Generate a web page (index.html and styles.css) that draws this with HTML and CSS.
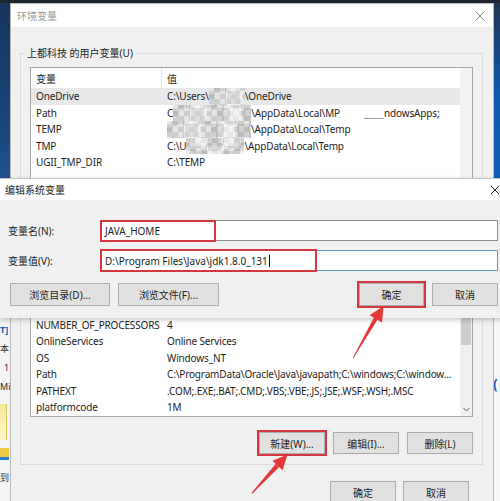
FILE: index.html
```html
<!DOCTYPE html>
<html lang="zh-CN">
<head>
<meta charset="utf-8">
<title>环境变量</title>
<link rel="stylesheet" href="styles.css">
</head>
<body>
<div class="desktop">
  <div class="strip strip-left"></div>
  <div class="strip strip-right"></div>

  <div class="peek peek-left">
    <span class="pk blue">T]</span>
    <span class="pk">本</span>
    <span class="pk indent">1</span>
    <span class="pk">Mi</span>
    <span class="pk-yellow"></span>
    <span class="pk-folder"></span>
    <span class="pk">到</span>
  </div>
  <div class="peek peek-right"><span class="pk blue big">(</span></div>

  <section class="win env">
    <header class="titlebar inactive">
      <span class="title">环境变量</span>
      <span class="close"><svg width="10" height="10" viewBox="0 0 10 10"><path d="M1 1L9 9M9 1L1 9" stroke="#8a8a8a" stroke-width="1"/></svg></span>
    </header>
    <div class="win-body">
      <fieldset class="group">
        <legend>上都科技 的用户变量(U)</legend>
        <div class="list list-user">
          <div class="rows">
            <div class="row head"><span class="c1">变量</span><span class="c2">值</span></div>
            <div class="row sel"><span class="c1">OneDrive</span><span class="c2">C:\Users\<i class="mosaic m-a"></i>\OneDrive</span></div>
            <div class="row"><span class="c1">Path</span><span class="c2">C<i class="mosaic m-b"></i>\AppData\Local\MP<i class="erase"></i>ndowsApps;</span></div>
            <div class="row"><span class="c1">TEMP</span><span class="c2"><i class="mosaic m-c"></i>\AppData\Local\Temp</span></div>
            <div class="row"><span class="c1">TMP</span><span class="c2">C:\U<i class="mosaic m-d"></i>\AppData\Local\Temp</span></div>
            <div class="row"><span class="c1">UGII_TMP_DIR</span><span class="c2">C:\TEMP</span></div>
          </div>
          <div class="vscroll plain"></div>
        </div>
        <div class="btnrow occluded">
          <button class="btn">新建(N)...</button>
          <button class="btn">编辑(E)...</button>
          <button class="btn">删除(D)</button>
        </div>
      </fieldset>

      <fieldset class="group group-sys">
        <legend><span class="occluded">系统变量(S)</span></legend>
        <div class="list list-sys">
          <div class="rows">
            <div class="row head occluded"><span class="c1">变量</span><span class="c2">值</span></div>
            <div class="row occluded"><span class="c1">DriverData</span><span class="c2">C:\Windows\System32\Drivers\DriverData</span></div>
            <div class="row"><span class="c1">NUMBER_OF_PROCESSORS</span><span class="c2">4</span></div>
            <div class="row"><span class="c1">OnlineServices</span><span class="c2">Online Services</span></div>
            <div class="row"><span class="c1">OS</span><span class="c2">Windows_NT</span></div>
            <div class="row"><span class="c1">Path</span><span class="c2">C:\ProgramData\Oracle\Java\javapath;C:\windows;C:\window...</span></div>
            <div class="row"><span class="c1">PATHEXT</span><span class="c2">.COM;.EXE;.BAT;.CMD;.VBS;.VBE;.JS;.JSE;.WSF;.WSH;.MSC</span></div>
            <div class="row"><span class="c1">platformcode</span><span class="c2">1M</span></div>
          </div>
          <div class="vscroll">
            <span class="sb-up"></span>
            <span class="sb-thumb"></span>
            <span class="sb-down"><svg width="7" height="5" viewBox="0 0 7 5"><path d="M0.5 1L3.5 4L6.5 1" fill="none" stroke="#606060" stroke-width="1"/></svg></span>
          </div>
        </div>
        <div class="btnrow">
          <button class="btn marked">新建(W)...</button>
          <button class="btn">编辑(I)...</button>
          <button class="btn">删除(L)</button>
        </div>
      </fieldset>

      <div class="btnrow footer">
        <button class="btn">确定</button>
        <button class="btn">取消</button>
      </div>
    </div>
  </section>

  <section class="win edit">
    <header class="titlebar">
      <span class="title">编辑系统变量</span>
      <span class="close"><svg width="10" height="10" viewBox="0 0 10 10"><path d="M1 1L9 9M9 1L1 9" stroke="#222" stroke-width="1"/></svg></span>
    </header>
    <div class="edit-body">
      <div class="field">
        <label class="flabel">变量名(N):</label>
        <div class="input"><span class="itext">JAVA_HOME</span><span class="mark mark-name"></span></div>
      </div>
      <div class="field">
        <label class="flabel">变量值(V):</label>
        <div class="input focus"><span class="itext">D:\Program Files\Java\jdk1.8.0_131</span><span class="caret"></span><span class="mark mark-value"></span></div>
      </div>
      <div class="btnrow edit-buttons">
        <button class="btn wide">浏览目录(D)...</button>
        <button class="btn wide2">浏览文件(F)...</button>
        <span class="spacer"></span>
        <button class="btn ok marked">确定</button>
        <button class="btn cancel">取消</button>
      </div>
    </div>
  </section>

  <svg class="arrows" width="500" height="501" viewBox="0 0 500 501">
    <polygon points="352.6,358.3 353.4,358.3 377.8,319.2 374.2,317.0" fill="#e5363a"/>
    <polygon points="383.5,306 382,322.5 369.6,315.3" fill="#e5363a"/>
    <polygon points="251.4,493.1 252.2,493.7 279.2,466.9 275.8,463.8" fill="#e5363a"/>
    <polygon points="287.5,454.5 282.6,470.2 272.4,460.8" fill="#e5363a"/>
  </svg>
</div>
</body>
</html>
```

FILE: styles.css
```css
* { box-sizing: border-box; }

html, body {
  margin: 0;
  padding: 0;
}

body {
  width: 500px;
  height: 501px;
  overflow: hidden;
  font-family: "Noto Sans", "Noto Sans CJK SC", sans-serif;
  font-size: 10px;
  color: #1e1e1e;
  background: #16406f;
}

.desktop {
  position: relative;
  width: 500px;
  height: 501px;
  overflow: hidden;
  background: linear-gradient(180deg, #1f2631 0, #1f2631 3px, #173a64 3px, #1a4b86 50%, #1b5597 100%);
}

/* content that lies fully under the edit dialog */
.occluded { visibility: hidden; }

/* desktop strips */
.strip {
  position: absolute;
  top: 0;
}
.strip-left {
  left: 0;
  width: 10px;
  height: 320px;
  background: linear-gradient(180deg, #1f2631 0, #1f2631 3px, #14355d 3px, #19477e 40%, #235c9c 70%, #184a85 100%);
}
.strip-right {
  right: 0;
  width: 8px;
  height: 320px;
  background: linear-gradient(180deg, #1f2631 0, #1f2631 3px, #1f3652 3px, #0f58b0 30%, #0b62c5 100%);
}

.peek {
  position: absolute;
  top: 318px;
  bottom: 0;
  overflow: hidden;
  background: #f4f4f4;
  display: flex;
  flex-direction: column;
  font-family: "Noto Sans", "Noto Sans CJK SC", sans-serif;
  font-size: 9px;
}
.peek-left {
  left: 0;
  width: 10px;
  padding-top: 2px;
}
.peek-right {
  right: 0;
  width: 7px;
  padding-top: 54px;
  background: #f7f7f7;
}
.pk {
  display: block;
  height: 19px;
  line-height: 19px;
  white-space: nowrap;
  color: #333;
}
.pk.indent { padding-left: 4px; }
.pk.blue { color: #1d5fb5; font-weight: bold; }
.pk.big { font-size: 14px; height: 24px; line-height: 24px; }
.pk-yellow {
  display: block;
  width: 7px;
  height: 36px;
  margin: 8px 0 8px;
  background: linear-gradient(180deg, #f3e79a, #fff7c8);
  border-right: 1px solid #d9c35a;
}
.pk-folder {
  display: block;
  width: 9px;
  height: 16px;
  background: linear-gradient(180deg, #f2c744 0, #f2c744 55%, #2a7fd4 55%, #2a7fd4 75%, #f4f4f4 75%);
  margin-bottom: 4px;
}

/* windows */
.win {
  position: absolute;
  background: #f0f0f0;
}

.env {
  left: 10px;
  top: 3px;
  width: 484px;
  height: 510px;
  border: 1px solid #b9b9b9;
  border-bottom: 0;
}

.titlebar {
  display: flex;
  align-items: center;
  background: #ffffff;
}
.env .titlebar {
  height: 23px;
  padding-left: 6px;
}
.titlebar.inactive .title { color: #9a9a9a; }
.title { font-size: 10px; }
.close {
  margin-left: auto;
  display: flex;
  align-items: center;
  justify-content: center;
  width: 26px;
  height: 100%;
}

.win-body {
  padding: 18px 10px 0 9px;
}

.group {
  margin: 0;
  min-width: 0;
  border: 1px solid #dcdcdc;
  padding: 6px 9px 10px;
}
.group legend {
  padding: 0 2px;
  margin-left: -5px;
  line-height: 16px;
  font-size: 10px;
}
.group-sys { margin-top: 8px; }

.list {
  display: flex;
  background: #ffffff;
  border: 1px solid #a6a6a6;
  overflow: hidden;
  letter-spacing: -0.15px;
}
.list-user { height: 141px; }
.list-sys { height: 138px; }

.rows {
  flex: 1;
  min-width: 0;
  overflow: hidden;
}

.row {
  display: flex;
  align-items: center;
  height: 16.5px;
  white-space: nowrap;
}
.row.head { height: 20px; letter-spacing: 0; }
.row.sel { background: #e8e8e8; }

.c1 {
  width: 131px;
  flex: none;
  padding-left: 5px;
  overflow: hidden;
}
.head .c1 {
  border-right: 1px solid #e3e3e3;
  height: 100%;
  display: flex;
  align-items: center;
}
.c2 {
  flex: 1;
  min-width: 0;
  padding-left: 5px;
  height: 100%;
  display: flex;
  align-items: center;
  overflow: hidden;
}

.mosaic {
  display: inline-block;
  flex: none;
  height: 16.5px;
  background:
    repeating-conic-gradient(rgba(0, 0, 0, 0.09) 0 25%, transparent 0 50%) 5px 3px / 26px 26px,
    repeating-conic-gradient(rgba(255, 255, 255, 0.5) 0 25%, transparent 0 50%) 0 0 / 34px 34px,
    repeating-conic-gradient(#cdcdcd 0 25%, #e6e6e6 0 50%) 0 0 / 11px 11px;
}
.m-a { width: 36px; }
.m-b { width: 78px; }
.m-c { width: 84px; }
.m-d { width: 58px; background-position: 9px 0, 4px 8px, 4px 5px; }
.erase {
  display: inline-block;
  flex: none;
  width: 44px;
  height: 12px;
  background: linear-gradient(90deg, transparent 0 55%, #9a9a9a 55% 100%) 0 100% / 100% 1px no-repeat;
}

.vscroll {
  width: 12px;
  flex: none;
  background: #f0f0f0;
  display: flex;
  flex-direction: column;
}
.vscroll.plain { background: #f3f3f3; }
.sb-up { height: 17px; flex: none; }
.sb-thumb {
  height: 48px;
  flex: none;
  margin: 0 1px;
  background: #cdcdcd;
}
.sb-down {
  margin-top: auto;
  height: 14px;
  display: flex;
  align-items: center;
  justify-content: center;
}

.btnrow {
  display: flex;
  justify-content: flex-end;
  gap: 8px;
  margin-top: 8px;
}
.group-sys .btnrow { margin-top: 15px; }

.btn {
  width: 66px;
  height: 22px;
  flex: none;
  padding: 0;
  margin: 0;
  font-family: inherit;
  font-size: 10px;
  color: #1e1e1e;
  background: #e1e1e1;
  border: 1px solid #adadad;
  display: flex;
  align-items: center;
  justify-content: center;
}
.btn.marked {
  outline: 2px solid #d6363d;
  outline-offset: 0;
}

.footer {
  margin-top: 16px;
  margin-right: 14px;
  gap: 7px;
}

/* edit dialog */
.edit {
  left: 0;
  top: 178px;
  width: 512px;
  height: 140px;
  border-top: 1px solid #c4c4c4;
  box-shadow: 0 2px 5px rgba(0, 0, 0, 0.22);
}
.edit .titlebar {
  height: 21px;
  padding-left: 5px;
}
.edit .close { width: 34px; }

.edit-body {
  padding: 20px 14px 12px 8px;
}

.field {
  display: flex;
  align-items: center;
  height: 21px;
}
.field + .field { margin-top: 9px; }

.flabel { width: 92px; flex: none; }

.input {
  position: relative;
  flex: 1;
  height: 21px;
  display: flex;
  align-items: center;
  padding-left: 4px;
  background: #ffffff;
  border: 1px solid #8c8c8c;
}
.input.focus { border-color: #5a9ccc; }
.itext { white-space: nowrap; }
.caret {
  width: 1px;
  height: 12px;
  margin-left: 1px;
  background: #111;
}
.mark {
  position: absolute;
  left: -1px;
  border: 2px solid #d6363d;
}
.mark-name { top: -1px; width: 116px; height: 22px; }
.mark-value { top: -2px; width: 217px; height: 23px; }

.edit-buttons {
  margin-top: 12px;
  padding-left: 2px;
  justify-content: flex-start;
}
.edit-buttons .btn { height: 23px; }
.btn.wide { width: 100px; }
.btn.wide2 { width: 101px; }
.spacer { flex: 1; }
.btn.ok { width: 65px; }
.btn.cancel { width: 66px; }

.arrows {
  position: absolute;
  left: 0;
  top: 0;
  pointer-events: none;
}
```
